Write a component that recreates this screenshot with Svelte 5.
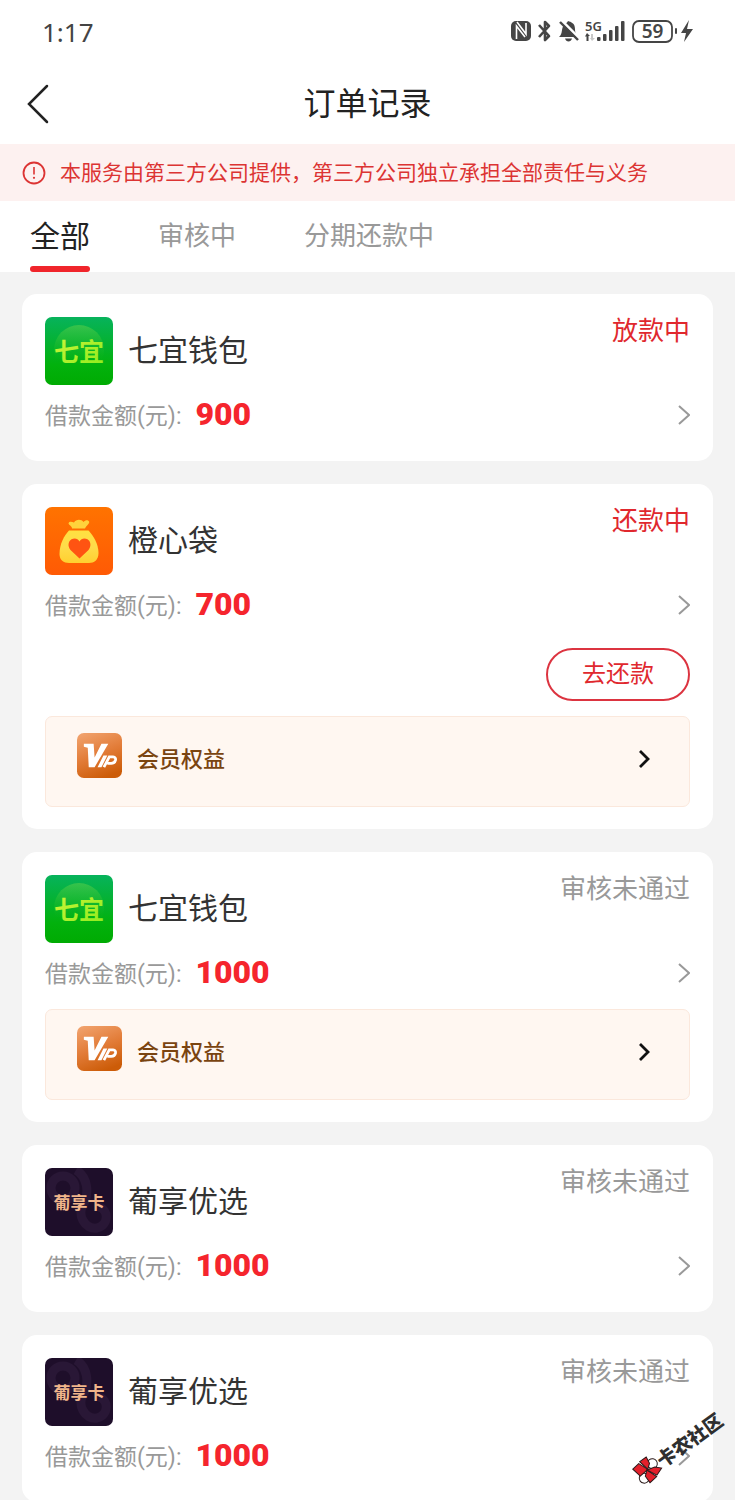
<script lang="ts">
  type Brand = "qiyi" | "orange" | "grape";

  interface Order {
    id: number;
    brand: Brand;
    name: string;
    amount: number;
    status: string;
    active?: boolean;
    repay?: boolean;
    vip?: boolean;
  }

  const tabs = ["全部", "审核中", "分期还款中"];

  const orders: Order[] = [
    { id: 1, brand: "qiyi", name: "七宜钱包", amount: 900, status: "放款中", active: true },
    { id: 2, brand: "orange", name: "橙心袋", amount: 700, status: "还款中", active: true, repay: true, vip: true },
    { id: 3, brand: "qiyi", name: "七宜钱包", amount: 1000, status: "审核未通过", vip: true },
    { id: 4, brand: "grape", name: "葡享优选", amount: 1000, status: "审核未通过" },
    { id: 5, brand: "grape", name: "葡享优选", amount: 1000, status: "审核未通过" },
  ];

  let current = $state(0);
</script>

{#snippet logo(brand: Brand)}
  <svg class="logo" viewBox="0 0 68 68" aria-hidden="true">
    {#if brand === "qiyi"}
      <defs>
        <linearGradient id="qiyi-bg" x1="0" y1="0" x2="0" y2="1">
          <stop offset="0" stop-color="#07b35c" />
          <stop offset="0.7" stop-color="#02b10d" />
          <stop offset="1" stop-color="#00ab02" />
        </linearGradient>
        <linearGradient id="qiyi-disc" x1="0" y1="0" x2="0" y2="1">
          <stop offset="0" stop-color="#5fd04a" stop-opacity="0.55" />
          <stop offset="0.7" stop-color="#2cc020" stop-opacity="0" />
        </linearGradient>
        <linearGradient id="qiyi-text" x1="0" y1="0" x2="1" y2="1">
          <stop offset="0" stop-color="#d3f43c" />
          <stop offset="1" stop-color="#8cec1c" />
        </linearGradient>
      </defs>
      <rect width="68" height="68" fill="url(#qiyi-bg)" />
      <circle cx="34" cy="33" r="25" fill="url(#qiyi-disc)" />
      <text class="logo-text" x="34" y="44" font-size="25" fill="url(#qiyi-text)">七宜</text>
    {:else if brand === "orange"}
      <defs>
        <linearGradient id="orange-bg" x1="0" y1="0" x2="0" y2="1">
          <stop offset="0" stop-color="#ff7300" />
          <stop offset="1" stop-color="#ff5a05" />
        </linearGradient>
        <linearGradient id="orange-bag" x1="0" y1="0" x2="0" y2="1">
          <stop offset="0" stop-color="#ffe040" />
          <stop offset="0.5" stop-color="#ffdc4a" />
          <stop offset="1" stop-color="#ffd030" />
        </linearGradient>
      </defs>
      <rect width="68" height="68" fill="url(#orange-bg)" />
      <path
        d="M27 21.500C27 19 23.500 18 23.500 16.300C24 14 27 14.500 29 15.500C31 12 36.500 12 38.500 15C40.500 12.500 43.500 12.500 44.300 15C44 17.500 40.800 19 40 21.500Z"
        fill="#ffd23c"
      />
      <path
        d="M24 23.500H43.500C48 28 53.500 37 53.500 46C53.500 53 49 56 44 56H24C18.500 56 14.500 53 14.500 47C14.500 37 19.500 28 24 23.500Z"
        fill="url(#orange-bag)"
      />
      <path
        d="M34.500 51.500L25.500 43C22.500 39.500 23 34.500 26.500 32.300C29.500 30.500 33 31.500 34.500 34.500C36 31.500 39.500 30.500 42.500 32.300C46 34.500 46.500 39.500 43.500 43Z"
        fill="#ff5412"
      />
    {:else}
      <rect width="68" height="68" fill="#1f0f2b" />
      <g fill="none" stroke="#352142" stroke-width="9" opacity="0.5">
        <circle cx="18" cy="20" r="12" />
        <path d="M31 2C43 9 44 25 39 36M39 36C31 46 40 62 52 60C64 57 64 42 54 39" />
      </g>
      <text class="logo-text" x="34" y="41" font-size="17" fill="#f0b58a">葡享卡</text>
    {/if}
  </svg>
{/snippet}

<div class="page">
  <header>
    <div class="status-bar">
      <span class="clock">1:17</span>
      <svg class="device" viewBox="0 0 184 28" aria-hidden="true">
        <g fill="#454545">
          <rect x="0" y="3" width="20" height="20" rx="5" />
          <path d="M5.500 21V8L14 19M6 4L15 16V5" fill="none" stroke="#fff" stroke-width="1.600" />
          <path
            d="M28 7L38 18L34 22V4L38 8L28 19"
            fill="none"
            stroke="#454545"
            stroke-width="2.600"
            stroke-linejoin="round"
          />
          <path d="M48 19C52 16 50 10 53 7C55 5 56 5 57 3C60 4 64 5 64 11C64 16 66 17 67 19Z" />
          <path d="M54 20.500H61C60 24.500 55 24.500 54 20.500Z" />
          <path d="M50 2L69 21" stroke="#fff" stroke-width="3" />
          <path d="M49 4L67 22" stroke="#454545" stroke-width="2.400" />
          <text x="74" y="13" font-size="13" font-weight="600">5G</text>
          <path d="M76 15L79 18H77.500V23H75.500V18.500H74Z" />
          <path d="M80 16H82V20H84L81 23L79 20H80Z" opacity="0.3" />
          <rect x="86" y="19" width="3.500" height="4" rx="1" />
          <rect x="92" y="16" width="3.500" height="7" rx="1" />
          <rect x="98" y="12" width="3.500" height="11" rx="1" />
          <rect x="104" y="8" width="3.500" height="15" rx="1" />
          <rect x="110" y="3" width="3.500" height="20" rx="1" />
          <rect x="122" y="3" width="39" height="21" rx="6" fill="none" stroke="#454545" stroke-width="1.800" />
          <text x="141.500" y="20" font-size="19" font-weight="600" text-anchor="middle">59</text>
          <rect x="164" y="10" width="2" height="6" rx="1" />
          <path d="M178 2L170 15H175L173 24L182 11H176Z" />
        </g>
      </svg>
    </div>
    <div class="title-bar">
      <button class="back" aria-label="返回">
        <svg width="24" height="40" viewBox="0 0 24 40" aria-hidden="true">
          <path d="M21 2L3 20L21 38" fill="none" stroke="#222" stroke-width="2.500" stroke-linecap="round" />
        </svg>
      </button>
      <h1>订单记录</h1>
    </div>
  </header>

  <div class="notice">
    <svg width="24" height="24" viewBox="0 0 24 24" aria-hidden="true">
      <circle cx="12" cy="12" r="10.500" fill="none" stroke="#dc3433" stroke-width="1.800" />
      <path d="M12 6V13.500" stroke="#dc3433" stroke-width="1.600" />
      <circle cx="12" cy="16.800" r="1.100" fill="#dc3433" />
    </svg>
    <span>本服务由第三方公司提供，第三方公司独立承担全部责任与义务</span>
  </div>

  <nav class="tabs">
    {#each tabs as tab, i}
      <button class="tab" class:selected={current === i} onclick={() => (current = i)}>{tab}</button>
    {/each}
  </nav>

  <main>
    {#each orders as order (order.id)}
      <article class="card">
        <div class="card-head">
          {@render logo(order.brand)}
          <h2>{order.name}</h2>
          <span class="state" class:active={order.active}>{order.status}</span>
        </div>
        <div class="amount-row">
          <span class="label">借款金额(元):</span>
          <strong class="amount">{order.amount}</strong>
          <button class="detail" aria-label="查看详情">
            <svg width="14" height="22" viewBox="0 0 14 22" aria-hidden="true">
              <path d="M3 3L13 12L3 21" fill="none" stroke="#999" stroke-width="2" />
            </svg>
          </button>
        </div>
        {#if order.repay}
          <button class="repay">去还款</button>
        {/if}
        {#if order.vip}
          <a class="vip" href="#vip">
            <svg class="vip-badge" width="45" height="45" viewBox="0 0 46 46" aria-hidden="true">
              <defs>
                <linearGradient id="vip-bg" x1="0.200" y1="0" x2="0.600" y2="1">
                  <stop offset="0" stop-color="#f0a06a" />
                  <stop offset="0.500" stop-color="#e27c38" />
                  <stop offset="1" stop-color="#cc5c08" />
                </linearGradient>
              </defs>
              <rect width="46" height="46" rx="7" fill="url(#vip-bg)" />
              <path d="M7 11H17L18 25L25 11H32L18 35H12L11 15L7 14Z" fill="#fff" />
              <path d="M27 23H31L25 35H21Z" fill="#fff" />
              <path
                d="M27.500 35L33 24.500H37C41 24.500 40 31 35 31H31"
                fill="none"
                stroke="#fff"
                stroke-width="2.800"
              />
            </svg>
            <span>会员权益</span>
            <svg class="vip-arrow" width="12" height="20" viewBox="0 0 12 20" aria-hidden="true">
              <path d="M2 1L10 9L2 17" fill="none" stroke="#111" stroke-width="2.800" />
            </svg>
          </a>
        {/if}
      </article>
    {/each}
  </main>

  <svg class="watermark" width="120" height="110" viewBox="0 0 120 110" aria-hidden="true">
    <g transform="translate(32 78) rotate(-36)">
      <g stroke="#2a1a1a" stroke-width="1">
        <circle cx="-7" cy="5" r="5" fill="#fff" />
        <circle cx="8" cy="-2" r="5" fill="#fff" />
        <path d="M-11 -9L-3 -10L1 0L-9 1Z" fill="#e3202b" />
        <path d="M-1 -11L7 -11L6 -4L1 0Z" fill="#e3202b" />
        <path d="M-5 12L-5 4L0 0L4 11Z" fill="#e3202b" />
        <path d="M5 10L0 0L8 2L13 7Z" fill="#e3202b" />
      </g>
      <text x="14" y="8" font-size="19" font-weight="900" fill="#2f2f2f">卡农社区</text>
    </g>
  </svg>
</div>

<style>
  :global(body) {
    background: #f3f3f3;
  }

  .page {
    position: relative;
    min-height: 100vh;
    overflow: hidden;
    font-family: Roboto, "Noto Sans CJK SC", sans-serif;
    color: #333;
  }

  button {
    padding: 0;
    border: 0;
    background: none;
    font: inherit;
    color: inherit;
    cursor: pointer;
  }

  svg {
    display: block;
    flex: none;
  }

  header,
  .tabs {
    background: #fff;
  }

  .status-bar {
    display: flex;
    align-items: center;
    justify-content: space-between;
    height: 64px;
    padding: 0 40px 0 42px;
  }

  .clock {
    font-family: "Noto Sans", sans-serif;
    font-size: 26px;
    color: #444;
  }

  .device {
    width: 184px;
    height: 28px;
    font-family: "Noto Sans", sans-serif;
  }

  .title-bar {
    display: grid;
    grid-template-columns: 1fr auto 1fr;
    align-items: center;
    height: 80px;
    padding: 0 26px;
  }

  .back {
    justify-self: start;
  }

  h1 {
    margin: 0;
    font-size: 32px;
    font-weight: 400;
    line-height: 48px;
    color: #222;
  }

  .notice {
    display: flex;
    align-items: center;
    gap: 14px;
    height: 57px;
    padding: 0 22px;
    background: #fdf1f0;
    font-size: 21px;
    line-height: 24px;
    color: #dc3433;
    white-space: nowrap;
  }

  .tabs {
    display: flex;
    gap: 68px;
    height: 71px;
    padding: 0 30px;
  }

  .tab {
    border-bottom: 6px solid transparent;
    font-size: 26px;
    color: #999;
  }

  .tab.selected {
    position: relative;
    font-size: 30px;
    color: #222;
  }

  .tab.selected::after {
    content: "";
    position: absolute;
    right: 0;
    bottom: -6px;
    left: 0;
    height: 6px;
    border-radius: 3px;
    background: #f0252b;
  }

  main {
    display: flex;
    flex-direction: column;
    gap: 23px;
    padding: 22px 22px 0;
  }

  .card {
    display: flex;
    flex-direction: column;
    padding: 23px 23px 22px;
    border-radius: 15px;
    background: #fff;
  }

  .card-head {
    display: flex;
    align-items: center;
    gap: 15px;
  }

  .logo {
    width: 68px;
    height: 68px;
    border-radius: 7px;
  }

  .logo-text {
    font-family: "Noto Sans CJK SC", sans-serif;
    font-weight: 700;
    text-anchor: middle;
  }

  h2 {
    flex: 1;
    margin: 0;
    font-size: 30px;
    font-weight: 400;
    line-height: 44px;
  }

  .state {
    align-self: flex-start;
    font-size: 26px;
    line-height: 28px;
    color: #999;
  }

  .state.active {
    color: #e0282e;
  }

  .amount-row {
    display: flex;
    align-items: center;
    height: 50px;
    padding-top: 4px;
  }

  .label {
    font-size: 23px;
    color: #999;
  }

  .amount {
    margin-left: 14px;
    font-size: 32px;
    font-weight: 900;
    line-height: 40px;
    color: #f5252d;
  }

  .detail {
    margin-left: auto;
  }

  .repay {
    align-self: flex-end;
    margin: 19px 0 3px;
    padding: 0 34px;
    border: 2px solid #dc3440;
    border-radius: 27px;
    font-size: 24px;
    line-height: 49px;
    color: #e0282e;
  }

  .vip {
    display: flex;
    align-items: center;
    gap: 15px;
    margin-top: 12px;
    padding: 16px 39px 19px 31px;
    border: 1px solid #fbe8dc;
    border-radius: 7px;
    background: #fff7f1;
    font-size: 22px;
    font-weight: 500;
    line-height: 54px;
    color: #7a4410;
    text-decoration: none;
  }

  .vip-badge {
    align-self: flex-start;
  }

  .vip-arrow {
    margin-left: auto;
  }

  .watermark {
    position: absolute;
    right: 0;
    bottom: 0;
  }
</style>
